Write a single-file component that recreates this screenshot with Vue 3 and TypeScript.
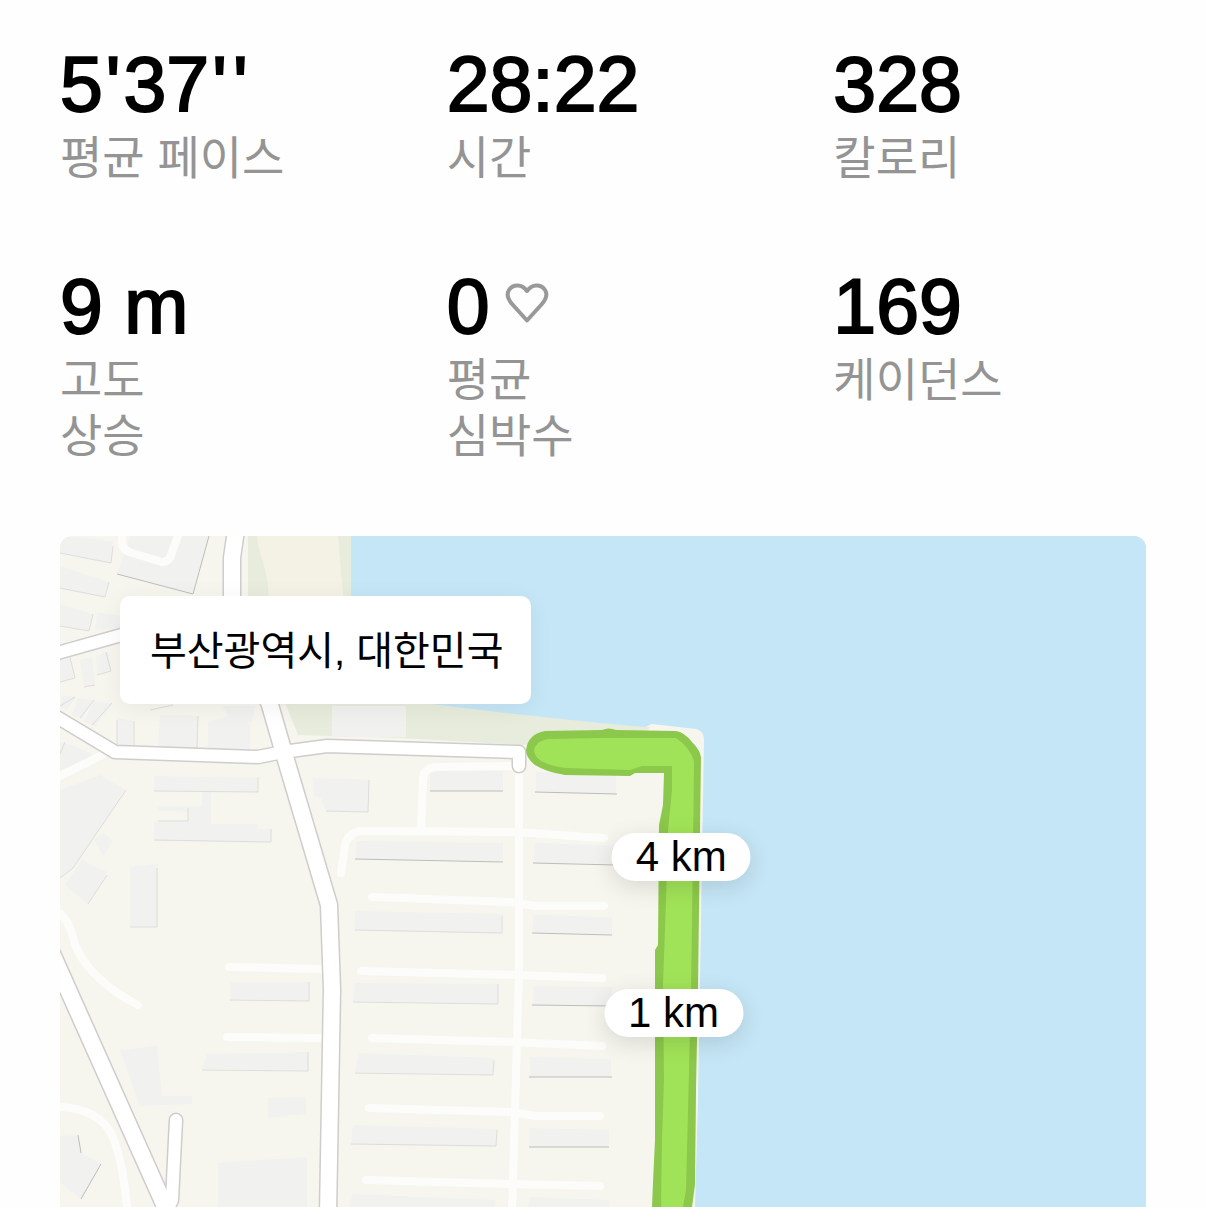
<script setup lang="ts">
interface Stat {
  value: string
  label: string[]
  heart?: boolean
}

interface Marker {
  text: string
  left: number
  top: number
}

const stats: Stat[] = [
  { value: "5'37''", label: ['평균 페이스'] },
  { value: '28:22', label: ['시간'] },
  { value: '328', label: ['칼로리'] },
  { value: '9 m', label: ['고도', '상승'] },
  { value: '0', label: ['평균', '심박수'], heart: true },
  { value: '169', label: ['케이던스'] },
]

const markers: Marker[] = [
  { text: '4 km', left: 57.2, top: 47.8 },
  { text: '1 km', left: 56.5, top: 71.1 },
]

const isMark = (ch: string): boolean => ch === "'"

const buildings: string[] = [
  '60,536 113,541 111,563 60,553',
  '60,566 109,582 105,597 60,588',
  '60,604 93,614 89,631 60,626',
  '130,536 209,536 193,594 117,574',
  '97,612 120,616 120,628 95,630',
  '60,659 70,657 75,678 60,682',
  '80,660 92,657 95,685 84,687',
  '96,656 108,652 111,671 97,675',
  '62,695 76,697 67,710 60,706',
  '78,698 94,700 82,718 72,716',
  '94,701 112,703 95,727 84,721',
  '117,718 134,721 132,746 117,745',
  '160,715 198,716 198,748 158,747',
  '208,722 228,716 250,724 250,749 208,748',
  '222,706 255,706 252,722 234,724',
  '60,742 72,745 93,755 70,768 60,770',
  '60,790 100,775 126,790 73,868 60,878',
  '65,885 82,860 107,872 88,904',
  '94,840 103,833 113,840 104,856',
  '154,776 258,778 258,792 211,792 211,824 258,824 258,829 272,829 271,843 154,841 154,822 188,822 188,812 158,811 158,806 202,806 202,792 154,791',
  '130,867 158,864 158,927 130,926',
  '313,778 369,780 368,812 326,811 321,798 314,796',
  '430,771 503,771 503,791 430,791',
  '536,772 616,776 616,794 536,792',
  '357,841 503,843 503,862 355,859',
  '535,843 620,846 620,864 533,863',
  '355,911 503,914 501,933 354,930',
  '534,915 612,917 612,934 532,933',
  '355,983 499,984 498,1004 353,1001',
  '534,986 612,987 612,1006 533,1005',
  '359,1053 494,1058 492,1075 355,1072',
  '530,1057 611,1059 611,1077 530,1077',
  '353,1125 497,1129 496,1147 351,1144',
  '530,1128 609,1130 609,1147 529,1147',
  '352,1194 495,1200 495,1207 350,1207',
  '530,1197 609,1200 609,1207 528,1207',
  '231,982 309,982 309,1001 230,999',
  '207,1054 309,1052 309,1070 202,1069',
  '120,1050 157,1046 162,1096 192,1096 192,1104 140,1106',
  '268,1098 306,1097 306,1114 268,1118',
  '218,1163 307,1157 307,1207 218,1207',
  '60,1136 78,1135 81,1153 101,1163 81,1199 60,1182',
]

const edges: string[] = [
  '60,553 111,563 113,546',
  '60,588 105,597 109,582',
  '60,626 89,631 93,614',
  '60,682 75,678 70,657',
  '84,687 95,685',
  '97,675 111,671 106,652',
  '60,706 75,697',
  '80,718 94,700',
  '92,725 112,703',
  '117,745 117,720',
  '134,745 134,721',
  '197,748 198,716',
  '150,710 173,705',
  '60,754 65,742',
  '60,878 73,868 126,790',
  '88,904 107,875',
  '154,791 258,792 258,777',
  '158,821 188,821 188,808',
  '154,840 271,842 271,829',
  '130,927 157,927 157,868',
  '326,811 368,812 369,780',
  '355,930 502,933 502,916',
  '353,1002 498,1004 498,984',
  '355,1073 493,1075 494,1060',
  '351,1144 496,1146 497,1130',
  '230,1000 309,1001 309,982',
  '202,1070 308,1071 308,1052',
]

const strongEdges: string[] = [
  '117,574 193,594 209,536',
  '430,791 503,791',
  '535,792 617,794',
  '355,859 503,862',
  '533,863 616,865',
  '532,933 612,935',
  '532,1005 612,1006',
  '529,1077 612,1077',
  '529,1147 609,1147',
  '78,1135 81,1153',
  '101,1164 81,1199',
]

const lanes: string[] = [
  'M58 777 L102 755',
  'M58 912 Q70 920 75 945 Q90 980 138 1005',
  'M58 1107 Q98 1108 112 1135 Q124 1165 127 1210',
  'M122 536 Q120 550 132 553 L162 562 Q170 562 172 552 L178 536',
  'M519 770 L519 970 L515 1110 L512 1210',
  'M421 830 L423 778 Q424 768 436 767 L515 766',
  'M341 873 L345 845 Q349 832 362 831 L515 832 L604 838',
  'M372 897 L510 902 L536 906 L604 906',
  'M361 971 L515 975 L602 978',
  'M372 1038 L510 1042 L602 1046',
  'M369 1108 L510 1112 L536 1116 L600 1116',
  'M366 1180 L510 1184 L600 1186',
  'M229 967 L322 969',
  'M227 1037 L322 1038',
]
</script>

<template>
  <main class="page">
    <dl class="stats">
      <div v-for="stat in stats" :key="stat.label.join(' ')" class="stat">
        <dd class="value">
          <span><span
            v-for="(ch, i) in stat.value"
            :key="i"
            :class="{ mark: isMark(ch) }"
          >{{ ch }}</span></span>
          <svg v-if="stat.heart" class="heart" viewBox="0 0 44 46" aria-hidden="true">
            <path d="M22 37.5 L7.5 21.5 C2.500 16 1.500 11 4 7 C8 0.800 17 0.800 22 8 C27 0.800 36 0.800 40 7 C42.500 11 41.500 16 36.500 21.500 Z" />
          </svg>
        </dd>
        <dt class="label">
          <span v-for="line in stat.label" :key="line">{{ line }}</span>
        </dt>
      </div>
    </dl>

    <section class="map" aria-label="부산광역시, 대한민국">
      <svg class="canvas" viewBox="60 536 1086 671" aria-hidden="true">
        <rect class="land" x="60" y="536" width="1086" height="671" />
        <path class="sand" d="M248 536 H351 V706 H275 L250 600 Z" />
        <path class="grass" d="M248 536 H257 C258 555 268 565 269 600 V640 H248 Z" />
        <path class="grass" d="M338 536 H351 V640 H347 Z" />
        <path class="grass" d="M284 700 H450 L650 727 L640 740 L525 745 L400 738 L298 735 Z" />
        <path class="water" d="M351 536 H1146 V1207 H695 L698 1100 L702 860 L704 740 Q704 731 696 729 L652 724 L645 727 L600 723 L515 714 L448 706 L351 695 Z" />

        <polygon v-for="b in buildings" :key="b" class="building" :points="b" />
        <rect class="building" x="332" y="706" width="74" height="31" />
        <polyline v-for="e in edges" :key="e" class="edge" :points="e" />
        <polyline v-for="e in strongEdges" :key="e" class="edge strong" :points="e" />
        <path v-for="l in lanes" :key="l" class="lane" :d="l" />

        <g v-for="layer in ['casing', 'road']" :key="layer" :class="layer">
          <path class="wide" d="M236 530 L232 558 L232 610 L270 705 L283 750 L329 905 L332 990 L328 1215" />
          <path class="wide" d="M45 938 L168 1213" />
          <path class="narrow" d="M50 655 L125 634" />
          <path class="narrow" d="M50 713 L115 752 L258 757 L283 752 L327 746 L519 752 V766" />
          <path class="narrow" d="M176 1120 L172 1200 L167 1210" />
        </g>

        <path class="route-edge" d="M545 731 L602 730 Q609 727 616 730 L676 731 Q684 732 692 742 Q700 750 701 757 L700 830 L698 990 L696 1090 L695 1185 L692 1207 H652 L653 1182 L655 1140 L655 950 L658 945 L659 825 L663 805 L664 773 L635 773 L630 776 L565 775 Q546 772 535 765 Q526 758 526 750 Q528 734 545 731 Z" />
        <path class="route" d="M548 739 L602 738 L676 738 Q682 742 687 748 Q693 756 694 762 L693 850 L691 990 L688 1110 L686 1190 L683 1207 H661 L662 1140 L664 1080 L663 985 L666 900 L668 830 L672 790 L672 766 L642 766 L630 770 L566 768 Q550 766 541 761 Q534 756 534 750 Q536 741 548 739 Z" />
      </svg>

      <p class="place">부산광역시, 대한민국</p>
      <span
        v-for="m in markers"
        :key="m.text"
        class="marker"
        :style="{ left: m.left + '%', top: m.top + '%' }"
      >{{ m.text }}</span>
    </section>
  </main>
</template>

<style>
body {
  margin: 0;
  background: #fefefe;
}
</style>

<style scoped>
.page {
  box-sizing: border-box;
  padding: 40px 60px 0;
  font-family: "Liberation Sans", "Noto Sans CJK KR", sans-serif;
  color: #000;
}

.stats {
  display: grid;
  grid-template-columns: repeat(3, 1fr);
  column-gap: 74px;
  row-gap: 76px;
  margin: 0 0 72px;
}

.stat {
  display: flex;
  flex-direction: column;
  gap: 2px;
}

.value {
  display: flex;
  align-items: center;
  gap: 16px;
  margin: 0;
  font-size: 77px;
  line-height: 88px;
  white-space: pre;
  -webkit-text-stroke: 2px #000;
}

.mark {
  padding: 0 3px;
}

.heart {
  width: 44px;
  height: 46px;
}

.heart path {
  fill: none;
  stroke: #999;
  stroke-width: 4;
  stroke-linejoin: round;
}

.label {
  display: flex;
  flex-direction: column;
  font-size: 46px;
  line-height: 56px;
  color: #949494;
  white-space: nowrap;
}

.map {
  position: relative;
  overflow: hidden;
  border-radius: 12px 12px 0 0;
}

.canvas {
  display: block;
  width: 100%;
}

.land { fill: #f6f6ef; }
.sand { fill: #f4f2e5; }
.grass { fill: #e7ecdc; }
.water { fill: #c5e6f6; }
.building { fill: #f1f1f0; }

.edge {
  fill: none;
  stroke: #dddddb;
  stroke-width: 1;
}

.strong {
  stroke: #bdbdbc;
}

.lane {
  fill: none;
  stroke: #fcfcfb;
  stroke-width: 8;
  stroke-linecap: round;
  stroke-linejoin: round;
}

.casing,
.road {
  fill: none;
  stroke-linecap: round;
  stroke-linejoin: round;
}

.casing { stroke: #cfcdcb; }
.casing .wide { stroke-width: 19; }
.casing .narrow { stroke-width: 15; }
.road { stroke: #fff; }
.road .wide { stroke-width: 16; }
.road .narrow { stroke-width: 12; }

.route-edge { fill: #8cc84b; }
.route { fill: #a1e358; }

.place {
  position: absolute;
  top: 60px;
  left: 60px;
  margin: 0;
  padding: 2px 28px 0 30px;
  border-radius: 10px;
  background: #fff;
  box-shadow: 0 4px 24px rgba(0, 0, 0, 0.06);
  font-size: 40px;
  line-height: 106px;
  white-space: nowrap;
}

.marker {
  position: absolute;
  padding: 0 24px;
  border-radius: 24px;
  background: #fff;
  box-shadow: 0 6px 24px rgba(0, 0, 0, 0.12);
  font-size: 42px;
  line-height: 48px;
  white-space: nowrap;
  transform: translate(-50%, -50%);
}
</style>
